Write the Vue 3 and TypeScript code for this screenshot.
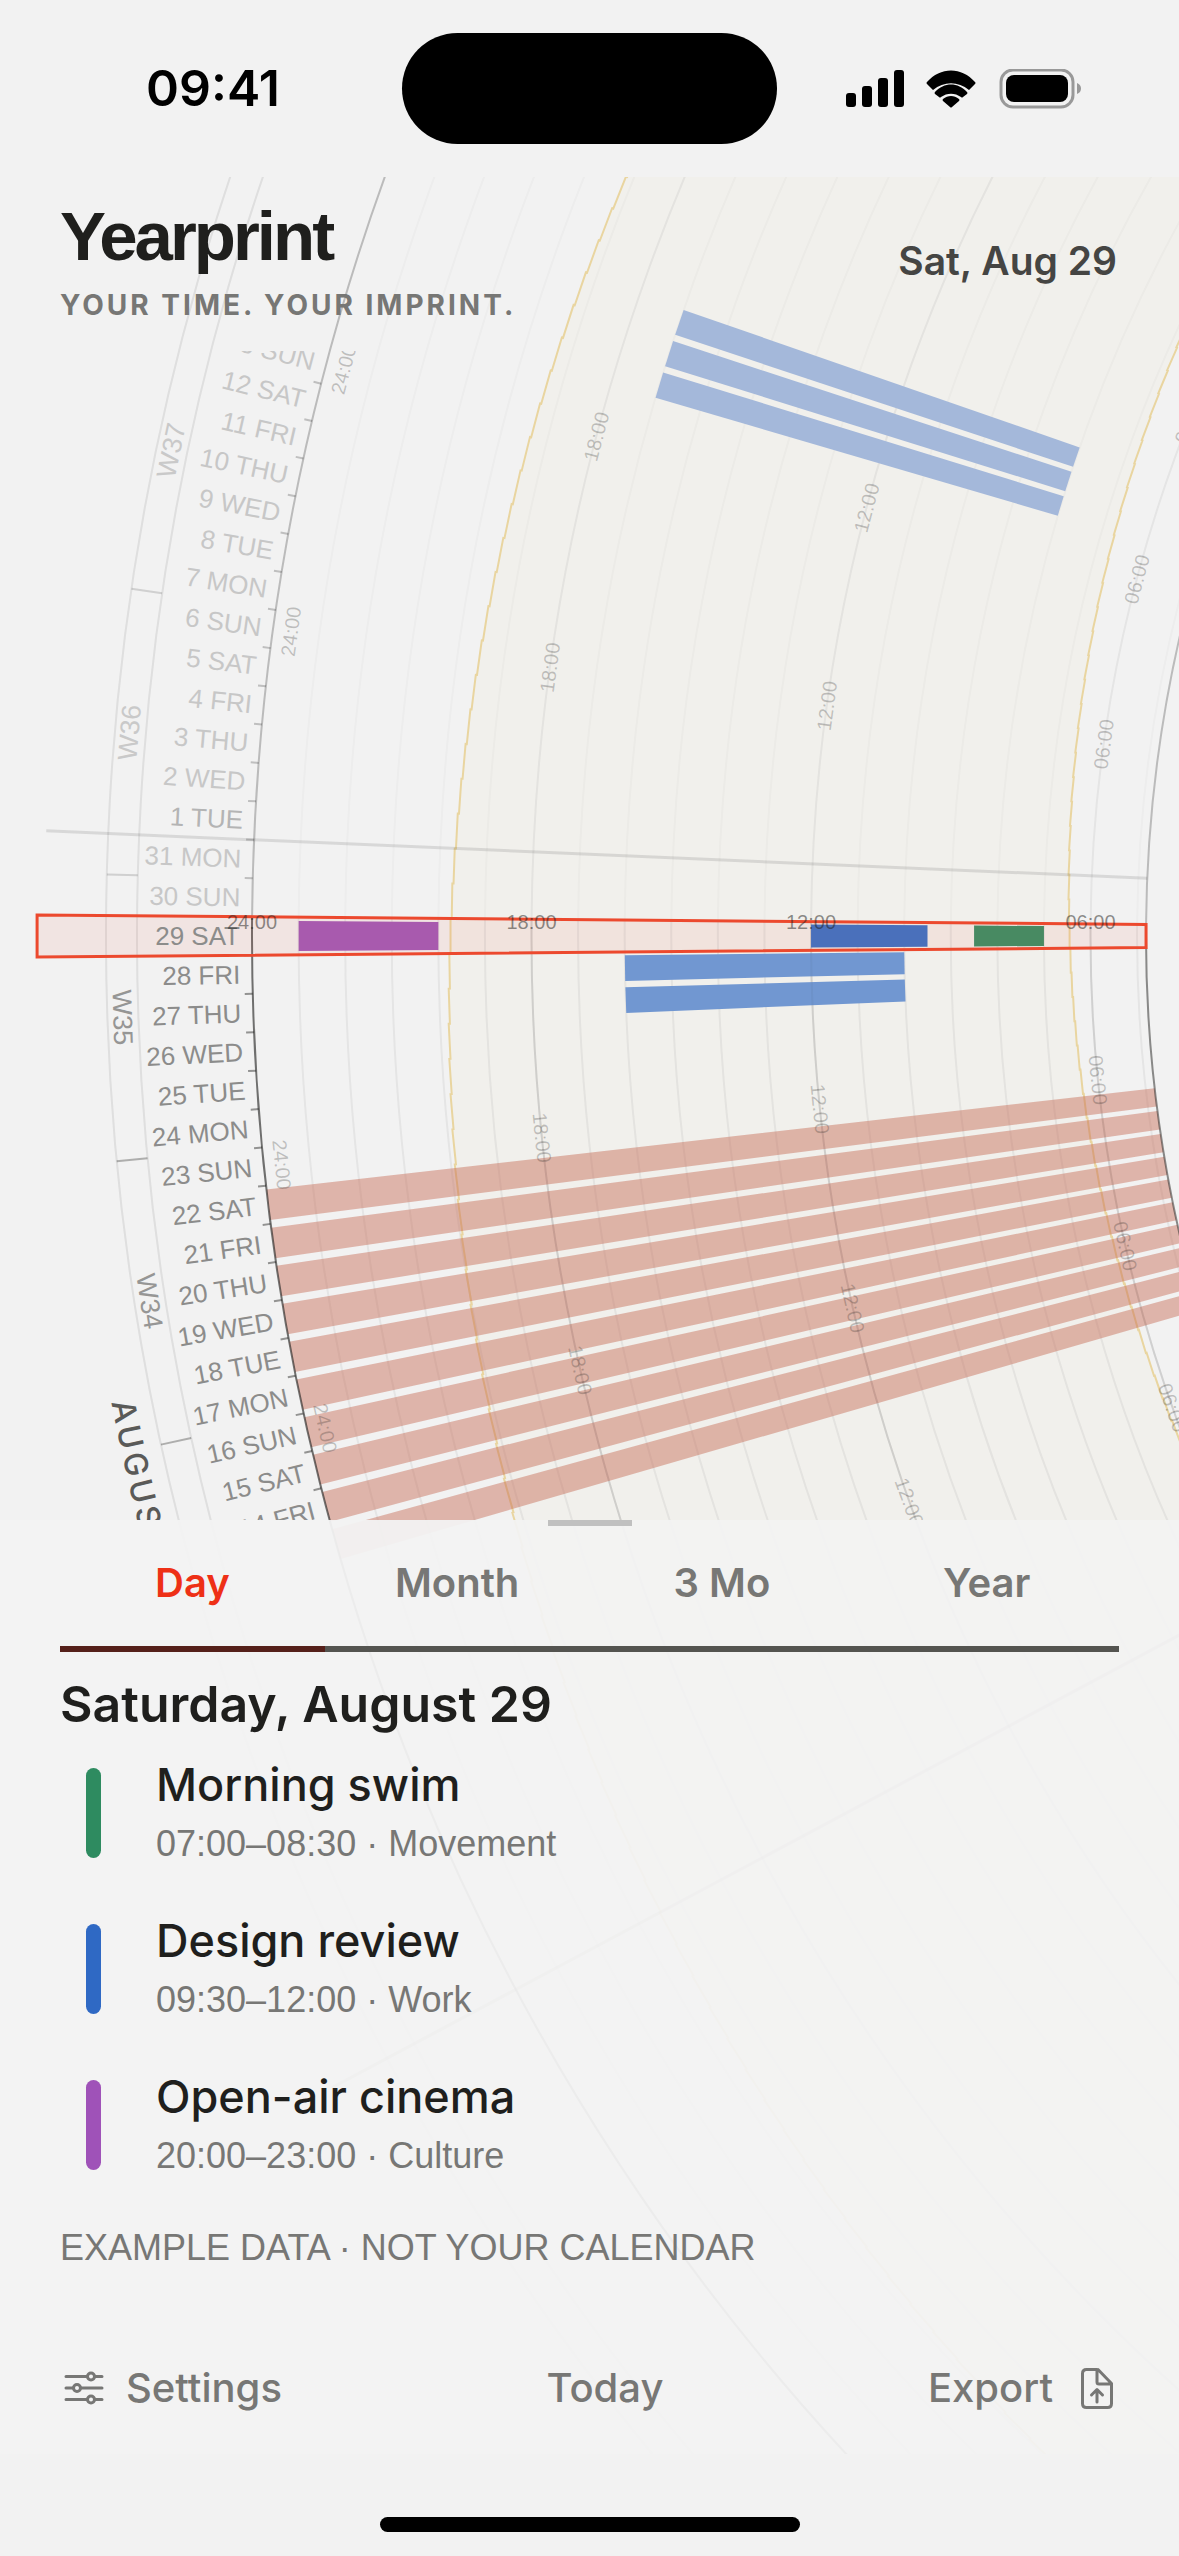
<script setup lang="ts">
import { ref } from 'vue'

interface Band { day: number; from: number; to: number; fill: string }
interface Entry { title: string; time: string; kind: string; color: string }

// Ring geometry, in chart units. Day offsets run clockwise into the future
// as negative numbers, with 0 on the selected day.
const CX = 2488
const CY = 936
const R = 2236
const R_IN = 1342
const STEP = (2 * Math.PI) / 365

const fmt = (v: number): string => v.toFixed(2)
const hourRadius = (h: number): number => R / 2 + (R / 48) * h
const px = (r: number, n: number): number => CX - r * Math.cos(n * STEP)
const py = (r: number, n: number): number => CY + r * Math.sin(n * STEP)
const at = (r: number, n: number): string => `${fmt(px(r, n))} ${fmt(py(r, n))}`
const deg = (n: number): number => (n * 360) / 365

const arc = (r: number, a: number, b: number): string =>
  `M${at(r, a)}A${r} ${r} 0 0 ${b > a ? 0 : 1} ${at(r, b)}`
const ray = (r1: number, r2: number, n: number): string => `M${at(r1, n)}L${at(r2, n)}`
const cell = (r1: number, r2: number, n: number, half: number): string =>
  `M${at(r1, n - half)}L${at(r2, n - half)}L${at(r2, n + half)}L${at(r1, n + half)}Z`

const TOP = -40
const SPLIT = -0.5
const BOTTOM = 60

const hours = Array.from({ length: 19 }, (_, i) => i + 5)
const majorHours = hours.filter((h) => h % 6 === 0)
const minorHours = hours.filter((h) => h % 6 !== 0)
const rings = (list: number[], a: number, b: number): string =>
  list.map((h) => arc(hourRadius(h), a, b)).join('')

const sunset = (n: number): number => hourRadius(19.74 + n * 0.026)
const sunrise = (n: number): number => hourRadius(6.45 - n * 0.0165)
const steps = (radius: (n: number) => number): string[] => {
  const out: string[] = []
  for (let n = TOP; n <= BOTTOM; n++) {
    out.push(at(radius(n), n - 0.5), at(radius(n), n + 0.5))
  }
  return out
}
const setPoints = steps(sunset)
const risePoints = steps(sunrise)
const daylight = `M${setPoints.join('L')}L${[...risePoints].reverse().join('L')}Z`
const setLine = `M${setPoints.join('L')}`
const riseLine = `M${risePoints.join('L')}`

const weekday = ['SUN', 'MON', 'TUE', 'WED', 'THU', 'FRI', 'SAT']
const dayLabels = Array.from({ length: 31 }, (_, i) => {
  const n = i - 15
  const date = new Date(2026, 7, 29 - n)
  return {
    n,
    text: `${date.getDate()} ${weekday[date.getDay()]}`,
    tone: n >= 0 ? 'past' : date.getDate() === 1 ? 'first' : 'future',
  }
})
const ticks = (a: number, b: number): string => {
  let d = ''
  for (let n = a; n <= b; n++) d += ray(R, R + 8, n + 0.5)
  return d
}

const weeks = [
  { n: -12, text: 'W37' },
  { n: -5, text: 'W36' },
  { n: 2, text: 'W35' },
  { n: 9, text: 'W34' },
]
const hourMarks = [-22, -15, -8, 6, 13, 20]
  .flatMap((n) =>
    [24, 18, 12, 6].map((h) => ({
      n,
      r: h === 24 ? R - 18 : hourRadius(h),
      text: `${String(h).padStart(2, '0')}:00`,
    })),
  )
  .filter((m) => py(m.r, m.n) > 345 && py(m.r, m.n) < 1530)
const dayMarks = [24, 18, 12, 6].map((h) => ({
  x: CX - hourRadius(h),
  text: `${String(h).padStart(2, '0')}:00`,
}))
const turn = (n: number): number => (n < 0 ? -90 - deg(n) : 90 - deg(n))

const bands: Band[] = [
  ...[-19, -18, -17].map((day) => ({ day, from: 8, to: 17, fill: '#a4b8da' })),
  ...[1, 2].map((day) => ({ day, from: 10, to: 16, fill: '#7197d1' })),
]
const trip = Array.from({ length: 10 }, (_, i) => cell(R, R_IN, i + 7, 0.4)).join('')
const today: Band[] = [
  { day: 0, from: 20, to: 23, fill: '#a85aae' },
  { day: 0, from: 9.5, to: 12, fill: '#4a70bb' },
  { day: 0, from: 7, to: 8.5, fill: '#488a62' },
]

const tabs = ['Day', 'Month', '3 Mo', 'Year']
const active = ref('Day')

const entries: Entry[] = [
  { title: 'Morning swim', time: '07:00–08:30', kind: 'Movement', color: '#2e8b60' },
  { title: 'Design review', time: '09:30–12:00', kind: 'Work', color: '#2f69c4' },
  { title: 'Open-air cinema', time: '20:00–23:00', kind: 'Culture', color: '#9f52b8' },
]
</script>

<template>
  <main class="app">
    <svg class="chart" viewBox="0 177 1179 2277" role="img" aria-label="Year ring">
      <defs>
        <clipPath id="labels"><rect x="0" y="351" width="1179" height="1169" /></clipPath>
        <path id="month" :d="arc(2422, 5, 22)" />
      </defs>

      <path :d="daylight" fill="#f1f0ec" />
      <g fill="none" stroke="#1f1f1d" stroke-width="2">
        <path :d="rings(minorHours, TOP, SPLIT)" stroke-opacity="0.022" />
        <path :d="rings(minorHours, SPLIT, BOTTOM)" stroke-opacity="0.06" />
        <path :d="rings(majorHours, TOP, SPLIT)" stroke-opacity="0.06" />
        <path :d="rings(majorHours, SPLIT, BOTTOM)" stroke-opacity="0.12" />
        <path :d="arc(2382, TOP, BOTTOM) + arc(2351, TOP, BOTTOM)" stroke-opacity="0.09" />
      </g>
      <path :d="setLine" class="sun" />
      <path :d="riseLine" class="sun" />

      <path v-for="b in bands" :key="`${b.day}`" :d="cell(hourRadius(b.to), hourRadius(b.from), b.day, 0.4)" :fill="b.fill" />
      <path :d="trip" fill="#c56852" fill-opacity="0.45" />
      <path :d="rings(majorHours, SPLIT, BOTTOM)" fill="none" stroke="#1f1f1d" stroke-width="2" stroke-opacity="0.04" />

      <g fill="none" stroke="#1f1f1d" stroke-width="2">
        <path :d="arc(R, TOP, SPLIT) + arc(R_IN, TOP, SPLIT)" stroke-opacity="0.26" />
        <path :d="arc(R, SPLIT, BOTTOM)" stroke-opacity="0.62" />
        <path :d="arc(R_IN, SPLIT, BOTTOM)" stroke-opacity="0.5" />
      </g>
      <g fill="none" stroke="#1f1f1d" stroke-width="2" clip-path="url(#labels)">
        <path :d="ticks(-17, -2)" stroke-opacity="0.24" />
        <path :d="ticks(-1, 17)" stroke-opacity="0.45" />
        <path :d="ray(2382, 2351, -8.5) + ray(2382, 2351, -1.5)" stroke-opacity="0.16" />
        <path :d="ray(2382, 2351, 5.5) + ray(2382, 2351, 12.5)" stroke-opacity="0.32" />
      </g>
      <g stroke="#1f1f1d" stroke-width="3">
        <path :d="ray(2444, R_IN, -2.5)" stroke-opacity="0.12" />
        <path :d="ray(2444, R_IN, 28.5)" stroke-opacity="0.28" />
      </g>

      <path :d="cell(2451, R_IN, 0, 0.5)" fill="#f03c1e" fill-opacity="0.07" stroke="#ec492e" stroke-width="3" />
      <path v-for="b in today" :key="b.from" :d="cell(hourRadius(b.to), hourRadius(b.from), b.day, 0.4)" :fill="b.fill" />

      <g clip-path="url(#labels)" text-anchor="middle">
        <g class="days">
          <text
            v-for="d in dayLabels"
            :key="d.n"
            :class="d.tone"
            :transform="`translate(${at(2248, d.n)}) rotate(${-deg(d.n)})`"
            y="9"
          >{{ d.text }}</text>
        </g>
        <g class="weeks">
          <text
            v-for="w in weeks"
            :key="w.n"
            :class="w.n > 0 ? 'past' : 'future'"
            :transform="`translate(${at(2367, w.n)}) rotate(${turn(w.n)})`"
            y="9"
          >{{ w.text }}</text>
        </g>
        <g class="hours">
          <text
            v-for="(m, i) in hourMarks"
            :key="i"
            :transform="`translate(${at(m.r, m.n)}) rotate(${turn(m.n)})`"
            y="7"
          >{{ m.text }}</text>
        </g>
        <g class="hours now">
          <text v-for="m in dayMarks" :key="m.text" :x="m.x" y="929">{{ m.text }}</text>
        </g>
        <text class="month"><textPath href="#month" startOffset="48%">AUGUST</textPath></text>
      </g>
    </svg>

    <div class="status">
      <span class="clock">09:41</span>
      <span class="island"></span>
      <svg class="signals" viewBox="0 0 236 40" aria-hidden="true">
        <rect x="0" y="24" width="10" height="14" rx="3" />
        <rect x="16" y="17" width="10" height="21" rx="3" />
        <rect x="32" y="9" width="10" height="29" rx="3" />
        <rect x="48" y="1" width="10" height="37" rx="3" />
        <path d="M87 21L81 15Q80 14 81 13C94-2.500 116-2.500 129 13Q130 14 129 15L123 21C112 12 98 12 87 21Z" />
        <path d="M89 23C98 13 112 13 121 23Q122 24 121 25L117 28Q116 29 115 28C109 23.500 101 23.500 95 28Q94 29 93 28L89 25Q88 24 89 23Z" />
        <path d="M97 30C102 26 108 26 113 30Q114 31 113 32L106 38Q105 39 104 38L97 32Q96 31 97 30Z" />
        <rect x="155" y="1" width="72" height="37" rx="12" fill="none" stroke="#999" stroke-width="3" />
        <rect x="160" y="6" width="62" height="27" rx="8" />
        <path d="M231 14Q235 15.500 235 19.500T231 25Z" fill="#999" />
      </svg>
    </div>

    <header class="stage">
      <div>
        <h1>Yearprint</h1>
        <p class="tagline">YOUR TIME. YOUR IMPRINT.</p>
      </div>
      <time class="date" datetime="2026-08-29">Sat, Aug 29</time>
    </header>

    <section class="sheet">
      <div class="handle"></div>
      <nav class="tabs">
        <button v-for="t in tabs" :key="t" type="button" :class="{ active: t === active }" @click="active = t">{{ t }}</button>
      </nav>
      <h2>Saturday, August 29</h2>
      <ul class="entries">
        <li v-for="e in entries" :key="e.title">
          <span class="bar" :style="{ background: e.color }"></span>
          <div>
            <h3>{{ e.title }}</h3>
            <p>{{ e.time }} · {{ e.kind }}</p>
          </div>
        </li>
      </ul>
      <p class="note">EXAMPLE DATA · NOT YOUR CALENDAR</p>
      <footer class="actions">
        <button type="button">
          <svg viewBox="0 0 48 48" class="icon" aria-hidden="true">
            <path d="M6 12.500H27M35 12.500H42M6 24H13M21 24H42M6 35.500H27M35 35.500H42" />
            <circle cx="31" cy="12.500" r="3.500" /><circle cx="17" cy="24" r="3.500" /><circle cx="31" cy="35.500" r="3.500" />
          </svg>
          Settings
        </button>
        <button type="button">Today</button>
        <button type="button">
          Export
          <svg viewBox="0 0 48 48" class="icon" aria-hidden="true">
            <path d="M26 5.500H15.500Q11.500 5.500 11.500 9.500V39.500Q11.500 43.500 15.500 43.500H36.500Q40.500 43.500 40.500 39.500V19.500L27 5.500M26 5.500V18Q26 20 28 20H40.500M26 38V26M20.500 31L26 25.500L31.500 31" />
          </svg>
        </button>
      </footer>
    </section>
    <div class="home"></div>
  </main>
</template>

<style>
body {
  margin: 0;
  background: #f2f2f2;
}
</style>

<style scoped>
.app {
  position: relative;
  overflow: hidden;
  background: #f2f2f2;
  color: #1f1f1d;
  font-family: Inter, "Liberation Sans", sans-serif;
}
.chart {
  position: absolute;
  top: 177px;
  left: 0;
  width: 100%;
  font-family: "Liberation Sans", Arial, sans-serif;
}
.sun {
  fill: none;
  stroke: #e9d5a0;
  stroke-width: 2;
}
.days {
  font-size: 26px;
  text-anchor: end;
}
.days .past { fill: #8c8c8b; }
.days .future { fill: #c7c7c7; }
.days .first { fill: #b4b4b4; }
.weeks { font-size: 27px; }
.weeks .past { fill: #969695; }
.weeks .future { fill: #c9c9c9; }
.hours {
  font-size: 20px;
  fill: #1f1f1d;
  fill-opacity: 0.25;
}
.hours.now { fill-opacity: 0.5; }
.month {
  font: 500 32px Inter, sans-serif;
  letter-spacing: 4px;
  fill: #5a5a58;
}

.status {
  position: relative;
  display: grid;
  grid-template-columns: 1fr 375px 1fr;
  align-items: center;
  height: 177px;
}
.clock {
  padding: 0 0 2px 24px;
  text-align: center;
  font-size: 50px;
  font-weight: 600;
  color: #000;
}
.island {
  height: 111px;
  border-radius: 56px;
  background: #000;
}
.signals {
  justify-self: center;
  width: 236px;
  height: 40px;
  margin-left: -28px;
}

.stage {
  position: relative;
  display: flex;
  justify-content: space-between;
  align-items: flex-start;
  box-sizing: border-box;
  aspect-ratio: 1179 / 1343;
  padding: 20px 60px 0;
}
h1, h2, h3, p, ul {
  margin: 0;
  padding: 0;
}
h1 {
  font: 700 69px/80px "Liberation Sans", Arial, sans-serif;
  letter-spacing: -3px;
}
.tagline {
  margin-top: 12px;
  font-size: 28px;
  line-height: 32px;
  font-weight: 700;
  letter-spacing: 3px;
  color: #777775;
}
.date {
  margin-top: 40px;
  padding-right: 2px;
  font-size: 39px;
  line-height: 48px;
  font-weight: 600;
  color: #454543;
}

.sheet {
  position: relative;
  padding: 0 60px 42px;
  background: rgba(242, 242, 242, 0.95);
}
.handle {
  width: 84px;
  height: 6px;
  margin: 0 auto;
  background: #c0c0c0;
}
.tabs {
  display: grid;
  grid-template-columns: repeat(4, 1fr);
}
button {
  border: 0;
  background: none;
  color: #777775;
  font: 500 40px/48px Inter, "Liberation Sans", sans-serif;
}
.tabs button {
  height: 126px;
  padding: 0 0 6px;
  border-bottom: 6px solid #545450;
  font-weight: 600;
}
.tabs .active {
  border-bottom-color: #55201a;
  color: #ee3016;
}
h2 {
  margin-top: 20px;
  font-size: 50px;
  line-height: 64px;
  font-weight: 600;
}
.entries {
  display: grid;
  gap: 48px;
  margin-top: 26px;
  list-style: none;
}
li {
  display: flex;
  gap: 55px;
  height: 108px;
  padding-left: 26px;
}
.bar {
  width: 15px;
  height: 90px;
  margin-top: 6px;
  border-radius: 8px;
}
h3 {
  font-size: 45px;
  line-height: 46px;
  font-weight: 500;
}
li p {
  margin-top: 12px;
  font: 36px/48px "Liberation Sans", Arial, sans-serif;
  color: #777775;
}
.note {
  margin-top: 42px;
  font: 36px/48px "Liberation Sans", Arial, sans-serif;
  color: #777775;
}
.actions {
  display: flex;
  justify-content: space-between;
  margin-top: 92px;
}
.actions button {
  display: flex;
  align-items: center;
  gap: 18px;
  padding: 0;
}
.icon {
  width: 48px;
  height: 48px;
  fill: none;
  stroke: #777775;
  stroke-width: 3;
  stroke-linecap: round;
  stroke-linejoin: round;
}
.home {
  width: 420px;
  height: 15px;
  margin: 63px auto 24px;
  border-radius: 8px;
  background: #000;
}
</style>
